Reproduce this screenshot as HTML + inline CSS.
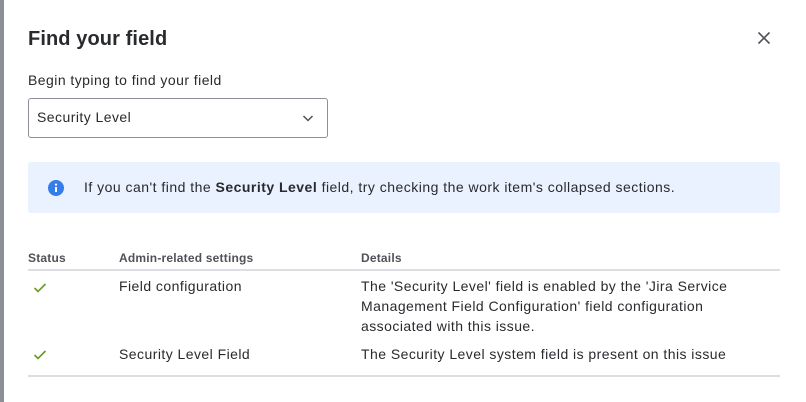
<!DOCTYPE html>
<html><head><meta charset="utf-8"><style>
*{margin:0;padding:0;box-sizing:border-box}
body{width:806px;height:402px;overflow:hidden;background:#fff;font-family:"Liberation Sans",sans-serif;color:#292a2e;position:relative}
.strip{position:absolute;left:0;top:0;width:4px;height:402px;background:#8c8f94}
.abs{position:absolute}
h1{position:absolute;left:28px;top:28px;font-size:20px;font-weight:bold;color:#292a2e;letter-spacing:0.1px}
.lbl{left:28px;top:72px;font-size:14px;color:#292a2e;letter-spacing:0.45px}
.sel{left:28px;top:98px;width:300px;height:40px;border:1px solid #8c8f97;border-radius:3px;font-size:14px;padding:10px 8px;letter-spacing:0.45px}
.info{left:28px;top:162px;width:752px;height:51px;background:#e9f2fe;border-radius:3px}
.info .t{position:absolute;left:56px;top:17px;font-size:14px;color:#292a2e;letter-spacing:0.48px;white-space:nowrap}
.th{top:251px;font-size:12px;font-weight:bold;color:#505258;letter-spacing:0.2px}
.td{font-size:14px;line-height:20px;color:#292a2e;letter-spacing:0.45px}
.line{left:28px;width:752px;height:2px;background:#dddee1}
</style></head><body>
<div class="strip"></div>
<h1>Find your field</h1>
<svg class="abs" style="left:756px;top:30px" width="16" height="16" viewBox="0 0 16 16"><path d="M2.5 2.5L13.5 13.5M13.5 2.5L2.5 13.5" stroke="#505258" stroke-width="1.6"/></svg>
<div class="abs lbl">Begin typing to find your field</div>
<div class="abs sel">Security Level</div>
<svg class="abs" style="left:302px;top:113px" width="12" height="10" viewBox="0 0 12 10"><path d="M1.5 3L6 7.5L10.5 3" fill="none" stroke="#505258" stroke-width="1.5"/></svg>
<div class="abs info">
<svg class="abs" style="left:20px;top:18px" width="16" height="16" viewBox="0 0 16 16"><circle cx="8" cy="8" r="8" fill="#357de8"/><rect x="7" y="7" width="2" height="5" fill="#fff"/><circle cx="8" cy="4.6" r="1.1" fill="#fff"/></svg>
<div class="t">If you can't find the <b>Security Level</b> field, try checking the work item's collapsed sections.</div>
</div>
<div class="abs th" style="left:28px">Status</div>
<div class="abs th" style="left:119px">Admin-related settings</div>
<div class="abs th" style="left:361px">Details</div>
<div class="abs line" style="top:269px"></div>
<svg class="abs" style="left:33px;top:282px" width="14" height="12" viewBox="0 0 14 12"><path d="M1.5 6L5 9.5L12.5 2" fill="none" stroke="#6a9a23" stroke-width="1.6"/></svg>
<div class="abs td" style="left:119px;top:276px">Field configuration</div>
<div class="abs td" style="left:361px;top:276px;width:410px">The 'Security Level' field is enabled by the 'Jira Service<br>Management Field Configuration' field configuration<br>associated with this issue.</div>
<svg class="abs" style="left:33px;top:349px" width="14" height="12" viewBox="0 0 14 12"><path d="M1.5 6L5 9.5L12.5 2" fill="none" stroke="#6a9a23" stroke-width="1.6"/></svg>
<div class="abs td" style="left:119px;top:344px">Security Level Field</div>
<div class="abs td" style="left:361px;top:344px;white-space:nowrap">The Security Level system field is present on this issue</div>
<div class="abs line" style="top:375px"></div>
</body></html>
